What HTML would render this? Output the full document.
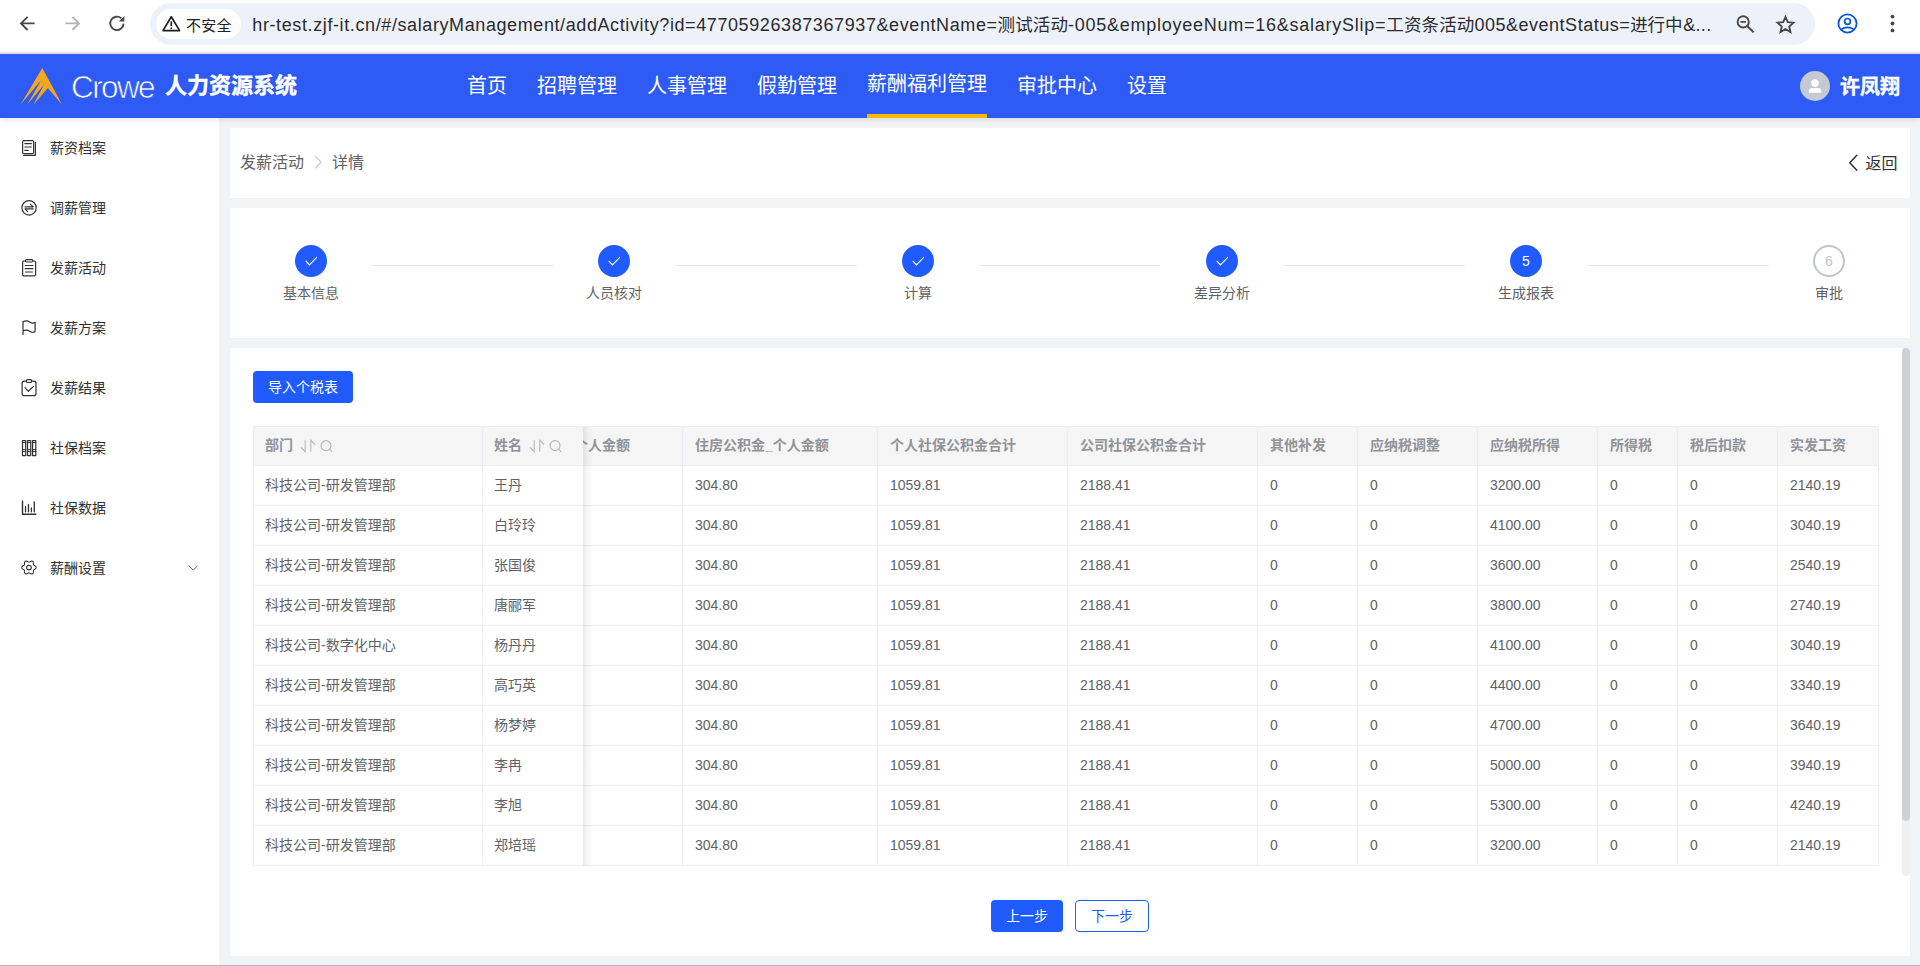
<!DOCTYPE html>
<html lang="zh-CN">
<head>
<meta charset="utf-8">
<title>人力资源系统</title>
<style>
*{box-sizing:border-box;margin:0;padding:0}
html,body{width:1920px;height:966px;overflow:hidden;background:#f2f3f5}
body{position:relative;font-family:"Liberation Sans","Noto Sans CJK SC",sans-serif;font-size:14px;color:#333}
.abs{position:absolute}
/* browser chrome */
#chrome{position:absolute;left:0;top:0;width:1920px;height:54px;background:#fff;border-bottom:2px solid #e4e5e1}
#pill{position:absolute;left:150px;top:3px;width:1665px;height:42px;border-radius:21px;background:#edf1fa}
#chip{position:absolute;left:6px;top:6px;width:85px;height:30px;border-radius:15px;background:#fff}
#chip span{position:absolute;left:30px;top:0;line-height:33px;font-size:15px;color:#1f1f1f;letter-spacing:0.2px}
#url{position:absolute;left:0;top:0;height:42px;color:#2b2b2b;white-space:nowrap}
#url span{position:absolute;top:0;line-height:45px;white-space:nowrap}
/* header */
#hdr{position:absolute;left:0;top:54px;width:1920px;height:64px;background:#2e5bf6;box-shadow:0 2px 6px rgba(0,0,0,.10);z-index:10}
#crowe{position:absolute;left:71px;top:13px;font-size:31.5px;line-height:40px;color:#fff;letter-spacing:-1.6px;font-weight:400;-webkit-text-stroke:0.7px #2e5bf6}
#sys{position:absolute;left:165px;top:12px;font-size:22px;line-height:40px;color:#fff;font-weight:700;letter-spacing:0;-webkit-text-stroke:0.4px #fff}
.nav{position:absolute;top:0;height:64px;line-height:64px;font-size:20px;color:#fff;white-space:nowrap}
.nav.on{line-height:61px}
.nav.on:after{content:"";position:absolute;left:0;right:0;bottom:0;height:4px;background:#fdb900}
#uname{position:absolute;left:1840px;top:0;line-height:67px;font-size:20px;font-weight:700;color:#fff;-webkit-text-stroke:0.35px #fff}
#avatar{position:absolute;left:1800px;top:17px;width:30px;height:30px;border-radius:50%;background:#c6c8cf;overflow:hidden}
/* sidebar */
#side{position:absolute;left:0;top:118px;width:219px;height:848px;background:#fff}
.mi{position:absolute;left:0;width:219px;height:60px;line-height:60px}
.mi span{position:absolute;left:50px;top:0;font-size:14px;color:#303133}
.mi svg{position:absolute;left:20px;top:21px;width:18px;height:18px;fill:none;stroke:#333;stroke-width:1.3}
/* cards */
.card{position:absolute;background:#fff}
.step{position:absolute;top:37px;width:120px;text-align:center}
.step .c{width:32px;height:32px;border-radius:50%;margin:0 auto;background:#1f5bff;color:#fff;line-height:32px;font-size:14px}
.step .t{margin-top:6px;font-size:14px;line-height:20px;color:#606266}
.sline{position:absolute;top:57px;height:1px;background:#e4e7ed}
.btn{position:absolute;height:32px;line-height:32px;border-radius:4px;font-size:14px;text-align:center;background:#1f5bff;color:#fff}
.btn.o{background:#fff;color:#1f5bff;border:1px solid #1f5bff;line-height:30px}
/* table */
#tbl{position:absolute;left:23px;top:78px;width:1626px;height:440px;border-left:1px solid #ebeef5;border-top:1px solid #ebeef5;overflow:hidden}
.r{position:absolute;left:0;height:40px;width:1626px}
.r div{position:absolute;top:0;height:40px;line-height:39px;padding-left:12px;border-right:1px solid #ebeef5;border-bottom:1px solid #ebeef5;color:#606266;font-size:14px;white-space:nowrap;overflow:hidden;background:#fff}
.r.h div{background:#f5f5f5;color:#909399;font-weight:700;line-height:37px}

.step .c svg{display:block}
.step .c.w{background:#fff;border:2px solid #c0c4cc;color:#c0c4cc;line-height:28px}
.ic{display:inline-block;vertical-align:middle;width:36px;height:16px;margin-left:6px;margin-top:-1px;fill:none;stroke:#b4b7bd;stroke-width:1.1}
.r .c1{z-index:3;padding-left:11px;border-right:0}
.r .c0{z-index:3;padding-left:11px}
#fshadow{position:absolute;left:329px;top:0;width:10px;height:439px;background:linear-gradient(to right,rgba(0,0,0,.085),rgba(0,0,0,.03) 45%,rgba(0,0,0,0));z-index:2;pointer-events:none}
.clip{display:block;margin-left:-21px;font-weight:700}
#vscroll{position:absolute;left:1672px;top:0;width:8px;height:528px;background:#f0f0f1;border-radius:4px}
#vthumb{position:absolute;left:0;top:0;width:8px;height:473px;border-radius:4px;background:#cfd0d3}
</style>
</head>
<body>
<div id="chrome">
<svg class="abs" style="left:0;top:0;width:1920px;height:53px;z-index:5" viewBox="0 0 1920 53" fill="none" stroke-linecap="butt">
<path d="M34.6 23.4 H21.4 M27.6 16.8 L21 23.4 L27.6 30" stroke="#474747" stroke-width="1.9"/>
<path d="M65.4 23.4 H78.6 M72.4 16.8 L79 23.4 L72.4 30" stroke="#b4b4b4" stroke-width="1.9"/>
<path d="M123.6 23.6 A6.7 6.7 0 1 1 121.4 18.4" stroke="#474747" stroke-width="1.9"/><path d="M124.4 16 V21.6 H118.8 Z" fill="#474747"/>
<path d="M171.3 16.8 L179.6 30.6 H163 Z" stroke="#1f1f1f" stroke-width="1.7" stroke-linejoin="round"/><path d="M171.3 21.4 V26" stroke="#1f1f1f" stroke-width="1.7"/><circle cx="171.3" cy="28.2" r="0.95" fill="#1f1f1f"/>
<circle cx="1743.2" cy="21.9" r="5.6" stroke="#474747" stroke-width="1.9"/><path d="M1747.3 26 L1753.6 32.4" stroke="#474747" stroke-width="2"/><path d="M1740.4 21.9 H1746" stroke="#474747" stroke-width="1.7"/>
<path d="M1785.5 16.9 L1787.8 22.2 L1793.5 22.7 L1789.2 26.5 L1790.5 32.1 L1785.5 29.1 L1780.5 32.1 L1781.8 26.5 L1777.5 22.7 L1783.2 22.2 Z" stroke="#474747" stroke-width="1.8" stroke-linejoin="miter"/>
<circle cx="1847.5" cy="23.5" r="9.1" stroke="#0b57d0" stroke-width="1.8"/><circle cx="1847.5" cy="21.4" r="2.9" stroke="#0b57d0" stroke-width="1.7"/><path d="M1840.9 29.6 Q1847.5 25.2 1854.1 29.6" stroke="#0b57d0" stroke-width="1.7"/>
<circle cx="1892.5" cy="16.6" r="1.9" fill="#474747"/><circle cx="1892.5" cy="23.5" r="1.9" fill="#474747"/><circle cx="1892.5" cy="30.4" r="1.9" fill="#474747"/>
</svg>
  <div id="pill"><div id="chip"><span>不安全</span></div>
  <div id="url"><span style="left:102.3px;font-size:18px;letter-spacing:0.608px">hr-test.zjf-it.cn/#/</span><span style="left:247.5px;font-size:18px;letter-spacing:0.595px">salaryManagement/addActivity?id=47705926387367937&amp;eventName=</span><span style="left:847.6px;font-size:17.5px;letter-spacing:0.100px">测试活动</span><span style="left:918.0px;font-size:18px;letter-spacing:0.746px">-005&amp;employeeNum=16&amp;salarySlip=</span><span style="left:1236.3px;font-size:17.5px;letter-spacing:0.120px">工资条活动</span><span style="left:1324.4px;font-size:18px;letter-spacing:0.517px">005&amp;eventStatus=</span><span style="left:1480.3px;font-size:17.5px;letter-spacing:-0.200px">进行中</span><span style="left:1533.2px;font-size:18px;letter-spacing:0.321px">&amp;...</span></div></div>
</div>
<div id="hdr">
  <div id="crowe">Crowe</div>
  <div id="sys">人力资源系统</div>
  <div class="nav" style="left:467px">首页</div>
  <div class="nav" style="left:537px">招聘管理</div>
  <div class="nav" style="left:647px">人事管理</div>
  <div class="nav" style="left:757px">假勤管理</div>
  <div class="nav on" style="left:867px">薪酬福利管理</div>
  <div class="nav" style="left:1017px">审批中心</div>
  <div class="nav" style="left:1127px">设置</div>
  <svg class="abs" style="left:0;top:0;width:1920px;height:64px" viewBox="0 54 1920 64">
<polygon points="42.33,68 62.1,104.8 47.9,88.1 33.3,104.8 44.3,84.3 27.1,104.8 41.5,79.8 20.4,104.8" fill="#f6a81c"/>
<circle cx="1815" cy="86" r="15" fill="#c5c9d2"/><circle cx="1815" cy="83.1" r="3.8" fill="#fff"/><path d="M1808.8 92.8 V91 Q1808.8 87.9 1812 87.9 H1818 Q1821.2 87.9 1821.2 91 V92.8 Z" fill="#fff"/>
</svg>
  <div id="uname">许凤翔</div>
</div>
<div id="side">
<svg class="abs" style="left:0;top:0;width:219px;height:848px" viewBox="0 118 219 848" fill="none" stroke="#303133" stroke-width="1.2" stroke-linecap="round" stroke-linejoin="round">
<rect x="22.6" y="140.6" width="11" height="13" rx="1.2"/><path d="M35.4 142.3 V155.3 H23.6"/><path d="M24.8 143.6 H31.4 M24.8 147 H31.4 M24.8 150.4 H28.2" stroke-width="1.1"/>
<circle cx="29.05" cy="207.85" r="7.2"/><path d="M25 206.9 H33.3 L30.3 204.2 M33.3 208.9 H25 L27.7 211.6" stroke-width="1.1"/>
<path d="M25.4 261 H23.6 Q22.6 261 22.6 262 V274.8 Q22.6 275.8 23.6 275.8 H34.6 Q35.6 275.8 35.6 274.8 V262 Q35.6 261 34.6 261 H32.8"/><rect x="25.4" y="259.6" width="7.4" height="2.4" rx="1.2"/><path d="M25.2 265.5 H33 M25.2 268.6 H33 M25.6 272 H32.6"/>
<path d="M23 321.4 V334.6 M23 321.9 C26 320.2 28.5 321.2 30 322.2 C31.5 323.2 33.5 323.2 35.1 322.4 V331.6 C33.5 332.4 31.5 332.4 30 331.4 C28.5 330.4 26 329.6 23 330.9"/>
<path d="M26.4 381.2 H24.3 Q22.1 381.2 22.1 383.4 V393.4 Q22.1 395.6 24.3 395.6 H33.8 Q36 395.6 36 393.4 V383.4 Q36 381.2 33.8 381.2 H31.6"/><rect x="26.4" y="379.6" width="5.2" height="2.9" rx="1.3"/><path d="M25 387.6 L28.4 391.3 L33.5 386.4"/>
<rect x="22.5" y="440.6" width="3.2" height="15"/><rect x="27.55" y="440.6" width="3.2" height="15"/><rect x="32.6" y="440.6" width="3.2" height="15"/><path d="M22.5 442.6 H25.7 M27.55 442.6 H30.75 M32.6 442.6 H35.8 M22.5 449.6 H25.7 M27.55 449.6 H30.75 M32.6 449.6 H35.8 M22.5 451.5 H25.7 M27.55 451.5 H30.75 M32.6 451.5 H35.8" stroke-width="1"/>
<path d="M22.5 501 V514.3 H35.8" stroke-width="1.4"/><path d="M25.55 506.6 V511.8 M28.5 504.4 V511.8 M31.4 507.9 V511.8 M34.3 502 V511.8" stroke-width="1.3"/>
<path d="M36.22 567.50 L36.07 568.12 L35.64 568.68 L35.06 569.13 L34.44 569.49 L33.93 569.81 L33.60 570.17 L33.46 570.64 L33.43 571.24 L33.42 571.95 L33.32 572.69 L33.06 573.33 L32.59 573.78 L31.98 573.96 L31.29 573.87 L30.60 573.59 L29.98 573.24 L29.45 572.96 L28.97 572.85 L28.49 572.96 L27.96 573.24 L27.34 573.59 L26.65 573.87 L25.96 573.96 L25.34 573.78 L24.88 573.33 L24.62 572.69 L24.52 571.95 L24.51 571.24 L24.48 570.64 L24.34 570.17 L24.01 569.81 L23.50 569.49 L22.88 569.13 L22.30 568.68 L21.87 568.12 L21.72 567.50 L21.87 566.88 L22.30 566.32 L22.88 565.87 L23.50 565.51 L24.01 565.19 L24.34 564.83 L24.48 564.36 L24.51 563.76 L24.52 563.05 L24.62 562.31 L24.88 561.67 L25.34 561.22 L25.96 561.04 L26.65 561.13 L27.34 561.41 L27.96 561.76 L28.49 562.04 L28.97 562.15 L29.45 562.04 L29.98 561.76 L30.60 561.41 L31.29 561.13 L31.98 561.04 L32.59 561.22 L33.06 561.67 L33.32 562.31 L33.42 563.05 L33.43 563.76 L33.46 564.36 L33.60 564.83 L33.93 565.19 L34.44 565.51 L35.06 565.87 L35.64 566.32 L36.07 566.88 Z" stroke-width="1.05"/><circle cx="28.97" cy="567.5" r="2.35" stroke-width="1.05"/>
<path d="M189 565.9 L193.2 570.2 L197.4 565.9" stroke="#606266" stroke-width="1"/>
</svg>
  <div class="mi" style="top:0"><span>薪资档案</span></div>
  <div class="mi" style="top:60px"><span>调薪管理</span></div>
  <div class="mi" style="top:120px"><span>发薪活动</span></div>
  <div class="mi" style="top:180px"><span>发薪方案</span></div>
  <div class="mi" style="top:240px"><span>发薪结果</span></div>
  <div class="mi" style="top:300px"><span>社保档案</span></div>
  <div class="mi" style="top:360px"><span>社保数据</span></div>
  <div class="mi" style="top:420px"><span>薪酬设置</span></div>
</div>
<div class="card" id="bc" style="left:230px;top:128px;width:1680px;height:70px">
<svg class="abs" style="left:0;top:0;width:1680px;height:70px" viewBox="230 128 1680 70" fill="none" stroke-linecap="round" stroke-linejoin="round">
<path d="M315.6 156.4 L321.2 162.2 L315.6 168" stroke="#c0c4cc" stroke-width="1.1"/>
<path d="M1856.8 155.2 L1849.8 162.7 L1856.8 170.2" stroke="#303133" stroke-width="1.5"/>
</svg>
  <div class="abs" style="left:10px;top:0;line-height:70px;font-size:16px;color:#606266">发薪活动</div>
  <div class="abs" style="left:102px;top:0;line-height:70px;font-size:16px;color:#606266">详情</div>
  <div class="abs" style="left:1635.5px;top:0;line-height:71px;font-size:16px;color:#303133">返回</div>
</div>
<div class="card" id="steps" style="left:230px;top:208px;width:1680px;height:130px">
<div class="step" style="left:21px"><div class="c"><svg viewBox="0 0 32 32" width="32" height="32"><path d="M10.9 16 L14.4 19.8 L22 12.1" fill="none" stroke="#fff" stroke-width="1.15"/></svg></div><div class="t">基本信息</div></div>
<div class="step" style="left:324px"><div class="c"><svg viewBox="0 0 32 32" width="32" height="32"><path d="M10.9 16 L14.4 19.8 L22 12.1" fill="none" stroke="#fff" stroke-width="1.15"/></svg></div><div class="t">人员核对</div></div>
<div class="step" style="left:628px"><div class="c"><svg viewBox="0 0 32 32" width="32" height="32"><path d="M10.9 16 L14.4 19.8 L22 12.1" fill="none" stroke="#fff" stroke-width="1.15"/></svg></div><div class="t">计算</div></div>
<div class="step" style="left:932px"><div class="c"><svg viewBox="0 0 32 32" width="32" height="32"><path d="M10.9 16 L14.4 19.8 L22 12.1" fill="none" stroke="#fff" stroke-width="1.15"/></svg></div><div class="t">差异分析</div></div>
<div class="step" style="left:1236px"><div class="c">5</div><div class="t">生成报表</div></div>
<div class="step" style="left:1539px"><div class="c w">6</div><div class="t">审批</div></div>
<div class="sline" style="left:141px;width:183px"></div>
<div class="sline" style="left:445px;width:182px"></div>
<div class="sline" style="left:749px;width:181px"></div>
<div class="sline" style="left:1053px;width:182px"></div>
<div class="sline" style="left:1357px;width:182px"></div>
</div><!--/steps--><!--/steps--><!--/steps--><!--/steps--><!--/steps--><!--/steps--><!--/steps-->
<div class="card" id="main" style="left:230px;top:348px;width:1680px;height:608px">
  <div class="btn" style="left:23px;top:23px;width:100px">导入个税表</div>
  <div id="tbl">
<div class="r h" style="top:0;height:39px"><div class="c0" style="left:0px;width:229px;height:39px">部门<svg class="ic" viewBox="0 0 36 16"><path d="M2 9.5 L6.2 13.7 V2.3 M11.8 13.7 V2.3 L16 6.5"/><circle cx="27" cy="7.6" r="5"/><path d="M30.6 11.2 L33.2 13.8"/></svg></div><div class="c1" style="left:229px;width:100px;height:39px">姓名<svg class="ic" viewBox="0 0 36 16"><path d="M2 9.5 L6.2 13.7 V2.3 M11.8 13.7 V2.3 L16 6.5"/><circle cx="27" cy="7.6" r="5"/><path d="M30.6 11.2 L33.2 13.8"/></svg></div><div class="c2" style="left:329px;width:100px;height:39px"><b class="clip">个人金额</b></div><div class="c3" style="left:429px;width:195px;height:39px">住房公积金_个人金额</div><div class="c4" style="left:624px;width:190px;height:39px">个人社保公积金合计</div><div class="c5" style="left:814px;width:190px;height:39px">公司社保公积金合计</div><div class="c6" style="left:1004px;width:100px;height:39px">其他补发</div><div class="c7" style="left:1104px;width:120px;height:39px">应纳税调整</div><div class="c8" style="left:1224px;width:120px;height:39px">应纳税所得</div><div class="c9" style="left:1344px;width:80px;height:39px">所得税</div><div class="c10" style="left:1424px;width:100px;height:39px">税后扣款</div><div class="c11" style="left:1524px;width:101px;height:39px">实发工资</div></div>
<div class="r" style="top:39px"><div class="c0" style="left:0px;width:229px">科技公司-研发管理部</div><div class="c1" style="left:229px;width:100px">王丹</div><div class="c2" style="left:329px;width:100px"></div><div class="c3" style="left:429px;width:195px">304.80</div><div class="c4" style="left:624px;width:190px">1059.81</div><div class="c5" style="left:814px;width:190px">2188.41</div><div class="c6" style="left:1004px;width:100px">0</div><div class="c7" style="left:1104px;width:120px">0</div><div class="c8" style="left:1224px;width:120px">3200.00</div><div class="c9" style="left:1344px;width:80px">0</div><div class="c10" style="left:1424px;width:100px">0</div><div class="c11" style="left:1524px;width:101px">2140.19</div></div>
<div class="r" style="top:79px"><div class="c0" style="left:0px;width:229px">科技公司-研发管理部</div><div class="c1" style="left:229px;width:100px">白玲玲</div><div class="c2" style="left:329px;width:100px"></div><div class="c3" style="left:429px;width:195px">304.80</div><div class="c4" style="left:624px;width:190px">1059.81</div><div class="c5" style="left:814px;width:190px">2188.41</div><div class="c6" style="left:1004px;width:100px">0</div><div class="c7" style="left:1104px;width:120px">0</div><div class="c8" style="left:1224px;width:120px">4100.00</div><div class="c9" style="left:1344px;width:80px">0</div><div class="c10" style="left:1424px;width:100px">0</div><div class="c11" style="left:1524px;width:101px">3040.19</div></div>
<div class="r" style="top:119px"><div class="c0" style="left:0px;width:229px">科技公司-研发管理部</div><div class="c1" style="left:229px;width:100px">张国俊</div><div class="c2" style="left:329px;width:100px"></div><div class="c3" style="left:429px;width:195px">304.80</div><div class="c4" style="left:624px;width:190px">1059.81</div><div class="c5" style="left:814px;width:190px">2188.41</div><div class="c6" style="left:1004px;width:100px">0</div><div class="c7" style="left:1104px;width:120px">0</div><div class="c8" style="left:1224px;width:120px">3600.00</div><div class="c9" style="left:1344px;width:80px">0</div><div class="c10" style="left:1424px;width:100px">0</div><div class="c11" style="left:1524px;width:101px">2540.19</div></div>
<div class="r" style="top:159px"><div class="c0" style="left:0px;width:229px">科技公司-研发管理部</div><div class="c1" style="left:229px;width:100px">唐郦军</div><div class="c2" style="left:329px;width:100px"></div><div class="c3" style="left:429px;width:195px">304.80</div><div class="c4" style="left:624px;width:190px">1059.81</div><div class="c5" style="left:814px;width:190px">2188.41</div><div class="c6" style="left:1004px;width:100px">0</div><div class="c7" style="left:1104px;width:120px">0</div><div class="c8" style="left:1224px;width:120px">3800.00</div><div class="c9" style="left:1344px;width:80px">0</div><div class="c10" style="left:1424px;width:100px">0</div><div class="c11" style="left:1524px;width:101px">2740.19</div></div>
<div class="r" style="top:199px"><div class="c0" style="left:0px;width:229px">科技公司-数字化中心</div><div class="c1" style="left:229px;width:100px">杨丹丹</div><div class="c2" style="left:329px;width:100px"></div><div class="c3" style="left:429px;width:195px">304.80</div><div class="c4" style="left:624px;width:190px">1059.81</div><div class="c5" style="left:814px;width:190px">2188.41</div><div class="c6" style="left:1004px;width:100px">0</div><div class="c7" style="left:1104px;width:120px">0</div><div class="c8" style="left:1224px;width:120px">4100.00</div><div class="c9" style="left:1344px;width:80px">0</div><div class="c10" style="left:1424px;width:100px">0</div><div class="c11" style="left:1524px;width:101px">3040.19</div></div>
<div class="r" style="top:239px"><div class="c0" style="left:0px;width:229px">科技公司-研发管理部</div><div class="c1" style="left:229px;width:100px">高巧英</div><div class="c2" style="left:329px;width:100px"></div><div class="c3" style="left:429px;width:195px">304.80</div><div class="c4" style="left:624px;width:190px">1059.81</div><div class="c5" style="left:814px;width:190px">2188.41</div><div class="c6" style="left:1004px;width:100px">0</div><div class="c7" style="left:1104px;width:120px">0</div><div class="c8" style="left:1224px;width:120px">4400.00</div><div class="c9" style="left:1344px;width:80px">0</div><div class="c10" style="left:1424px;width:100px">0</div><div class="c11" style="left:1524px;width:101px">3340.19</div></div>
<div class="r" style="top:279px"><div class="c0" style="left:0px;width:229px">科技公司-研发管理部</div><div class="c1" style="left:229px;width:100px">杨梦婷</div><div class="c2" style="left:329px;width:100px"></div><div class="c3" style="left:429px;width:195px">304.80</div><div class="c4" style="left:624px;width:190px">1059.81</div><div class="c5" style="left:814px;width:190px">2188.41</div><div class="c6" style="left:1004px;width:100px">0</div><div class="c7" style="left:1104px;width:120px">0</div><div class="c8" style="left:1224px;width:120px">4700.00</div><div class="c9" style="left:1344px;width:80px">0</div><div class="c10" style="left:1424px;width:100px">0</div><div class="c11" style="left:1524px;width:101px">3640.19</div></div>
<div class="r" style="top:319px"><div class="c0" style="left:0px;width:229px">科技公司-研发管理部</div><div class="c1" style="left:229px;width:100px">李冉</div><div class="c2" style="left:329px;width:100px"></div><div class="c3" style="left:429px;width:195px">304.80</div><div class="c4" style="left:624px;width:190px">1059.81</div><div class="c5" style="left:814px;width:190px">2188.41</div><div class="c6" style="left:1004px;width:100px">0</div><div class="c7" style="left:1104px;width:120px">0</div><div class="c8" style="left:1224px;width:120px">5000.00</div><div class="c9" style="left:1344px;width:80px">0</div><div class="c10" style="left:1424px;width:100px">0</div><div class="c11" style="left:1524px;width:101px">3940.19</div></div>
<div class="r" style="top:359px"><div class="c0" style="left:0px;width:229px">科技公司-研发管理部</div><div class="c1" style="left:229px;width:100px">李旭</div><div class="c2" style="left:329px;width:100px"></div><div class="c3" style="left:429px;width:195px">304.80</div><div class="c4" style="left:624px;width:190px">1059.81</div><div class="c5" style="left:814px;width:190px">2188.41</div><div class="c6" style="left:1004px;width:100px">0</div><div class="c7" style="left:1104px;width:120px">0</div><div class="c8" style="left:1224px;width:120px">5300.00</div><div class="c9" style="left:1344px;width:80px">0</div><div class="c10" style="left:1424px;width:100px">0</div><div class="c11" style="left:1524px;width:101px">4240.19</div></div>
<div class="r" style="top:399px"><div class="c0" style="left:0px;width:229px">科技公司-研发管理部</div><div class="c1" style="left:229px;width:100px">郑培瑶</div><div class="c2" style="left:329px;width:100px"></div><div class="c3" style="left:429px;width:195px">304.80</div><div class="c4" style="left:624px;width:190px">1059.81</div><div class="c5" style="left:814px;width:190px">2188.41</div><div class="c6" style="left:1004px;width:100px">0</div><div class="c7" style="left:1104px;width:120px">0</div><div class="c8" style="left:1224px;width:120px">3200.00</div><div class="c9" style="left:1344px;width:80px">0</div><div class="c10" style="left:1424px;width:100px">0</div><div class="c11" style="left:1524px;width:101px">2140.19</div></div>
<div id="fshadow"></div></div><!--/tbl-->
  <div id="vscroll"><div id="vthumb"></div></div>
  <div class="btn" style="left:761px;top:552px;width:72px">上一步</div>
  <div class="btn o" style="left:845px;top:552px;width:74px">下一步</div>
</div>
<div class="abs" style="left:0;top:965px;width:1920px;height:1px;background:#b5b3c1"></div>
</body>
</html>
